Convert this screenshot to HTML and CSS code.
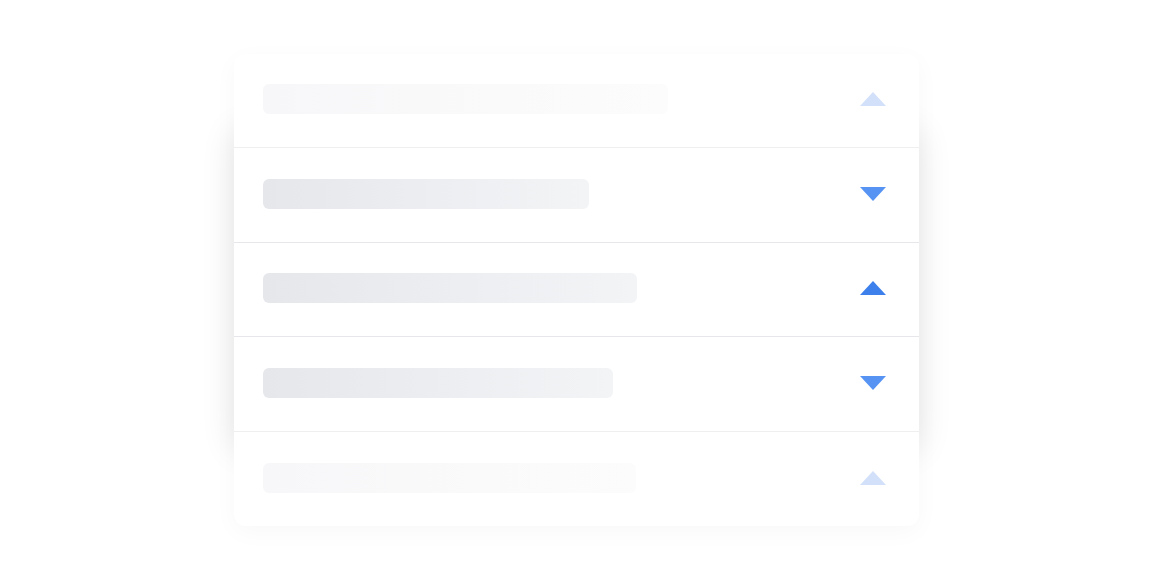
FILE: index.html
```html
<!DOCTYPE html>
<html lang="en">
<head>
<meta charset="utf-8">
<title>Accordion skeleton</title>
<link rel="stylesheet" href="styles.css">
</head>
<body>
<div class="stage">
  <div class="card">
    <div class="row faded">
      <div class="bar" style="width:405px"></div>
      <svg class="tri up" viewBox="0 0 26 14"><polygon points="0,14 13,0 26,14"/></svg>
    </div>
    <div class="row">
      <div class="bar" style="width:326px"></div>
      <svg class="tri down" viewBox="0 0 26 14"><polygon points="0,0 26,0 13,14"/></svg>
    </div>
    <div class="row">
      <div class="bar" style="width:374px"></div>
      <svg class="tri up strong" viewBox="0 0 26 14"><polygon points="0,14 13,0 26,14"/></svg>
    </div>
    <div class="row">
      <div class="bar" style="width:350px"></div>
      <svg class="tri down" viewBox="0 0 26 14"><polygon points="0,0 26,0 13,14"/></svg>
    </div>
    <div class="row faded last">
      <div class="bar" style="width:373px"></div>
      <svg class="tri up" viewBox="0 0 26 14"><polygon points="0,14 13,0 26,14"/></svg>
    </div>
  </div>
</div>
</body>
</html>
```

FILE: styles.css
```css
html, body {
  margin: 0;
  padding: 0;
  background: #ffffff;
  font-family: "Liberation Sans", Arial, sans-serif;
}

.stage {
  width: 1152px;
  height: 576px;
  padding-top: 54px;
  padding-left: 234px;
  box-sizing: border-box;
  display: flex;
  align-items: flex-start;
  justify-content: flex-start;
}

.card {
  position: relative;
  width: 685px;
  background: #ffffff;
  border-radius: 12px;
  box-shadow: 0 6px 24px rgba(20, 20, 40, 0.03);
  display: flex;
  flex-direction: column;
}

.card::before {
  content: "";
  position: absolute;
  top: 75px;
  bottom: 75px;
  left: 0;
  right: 0;
  border-radius: 12px;
  box-shadow: 0 0 34px rgba(20, 20, 40, 0.11);
  z-index: 0;
}

.row {
  position: relative;
  z-index: 1;
  height: 94.4px;
  box-sizing: border-box;
  display: flex;
  align-items: center;
  justify-content: space-between;
  padding: 0 33px 2px 29px;
  background: #ffffff;
  border-bottom: 1px solid #e6e7ea;
}

.row:first-child {
  border-radius: 12px 12px 0 0;
  border-bottom-color: #eeeff1;
  padding-bottom: 4px;
}

.row.last {
  border-bottom: none;
  border-radius: 0 0 12px 12px;
}

.row:nth-child(4) {
  border-bottom-color: #eeeff1;
}

.bar {
  height: 30px;
  border-radius: 6px;
  background: linear-gradient(to right, #e6e7eb, #f3f4f6);
}

.faded .bar {
  background: linear-gradient(to right, #f7f7f9, #fcfcfc);
}

.tri {
  width: 26px;
  height: 14px;
  display: block;
}

.tri polygon {
  fill: #5693f3;
}

.tri.strong polygon {
  fill: #3d80ec;
}

.faded .tri polygon {
  fill: #d2e0fa;
}
```
